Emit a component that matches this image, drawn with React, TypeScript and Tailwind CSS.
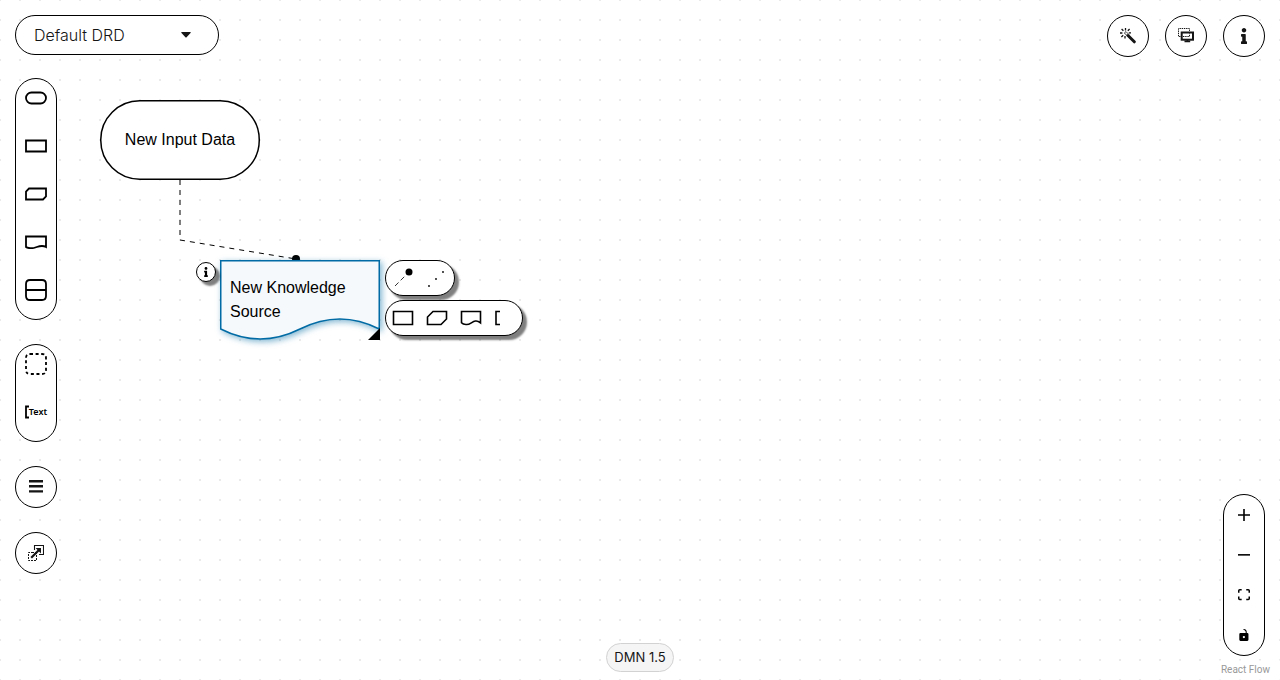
import type { ReactNode } from "react";
import { FaInfo } from "react-icons/fa";

const pill = "flex flex-col items-center rounded-full border border-black bg-white";
const round =
  "flex size-[42px] items-center justify-center rounded-full border border-black bg-white text-[#151515]";
const floating = "border border-black bg-white shadow-[4px_4px_2px_0px_rgba(0,0,0,0.5)]";

function Tool({ label, children }: { label: string; children: ReactNode }) {
  return (
    <button type="button" aria-label={label} className="flex h-12 w-10 items-center justify-center">
      {children}
    </button>
  );
}

function Shape({ d, h = 14, dash }: { d: string; h?: number; dash?: string }) {
  return (
    <svg width="24" height={h} viewBox={`0 0 24 ${h}`} fill="none" stroke="#000" strokeWidth="1.8" strokeDasharray={dash}>
      <path d={d} />
    </svg>
  );
}

function MiniShape({ label, d }: { label: string; d: string }) {
  return (
    <button type="button" aria-label={label} className="flex h-full w-[34px] items-center justify-center">
      <svg width="22" height="16" viewBox="0 0 22 16" fill="none" stroke="#000" strokeWidth="1.6">
        <path d={d} />
      </svg>
    </button>
  );
}

function WandIcon() {
  return (
    <svg width="16" height="16" viewBox="0 0 16 16" fill="none" stroke="#151515">
      <path d="M8 7.5L14.3 13.8" strokeWidth="3" strokeLinecap="round" />
      <path d="M4.4 5L7.4 8M6 3.6L9 6.6" strokeWidth=".8" />
      <path d="M4.3 4.9L6 3.6" strokeWidth=".8" />
      <path d="M5.5 0V2.4M1.6 1L3.4 2.8M0 5H2.4M9.6 1L7.8 2.8M1.4 9L3.2 7.2M5 8V10.4M8.8 4.8H11" strokeWidth="1.3" />
    </svg>
  );
}

function OverlaysIcon() {
  return (
    <svg width="16" height="16" viewBox="0 0 16 16" fill="none" stroke="#151515">
      <path d="M2.5 8.5H.5V.5H11.5V3.5" strokeDasharray="1.4 .8" />
      <rect x="3.7" y="4.5" width="11.3" height="7.2" strokeWidth="2" />
      <path d="M5 8.5H11.5V5.5" strokeDasharray="1.4 .8" />
      <path d="M6.5 13.4H12.2M9.4 12V14" strokeWidth="1.6" />
    </svg>
  );
}

function ExpandIcon() {
  return (
    <svg width="16" height="16" viewBox="0 0 16 16" fill="none" stroke="#151515">
      <path d="M6.5 5V.5H15.5V9.5H11" strokeWidth="1.1" />
      <path d="M5 7.5H.5V15.5H8.5V11" strokeDasharray="2 1" />
      <path d="M5 7.5H8.5V11" strokeDasharray="1 1" />
      <path d="M3.2 12.8L11 5" strokeWidth="2.2" />
      <path d="M7.6 3.1H13V8.5Z" fill="#151515" stroke="none" />
    </svg>
  );
}

function ControlButton({ label, children }: { label: string; children: ReactNode }) {
  return (
    <button type="button" aria-label={label} className="flex size-10 items-center justify-center">
      {children}
    </button>
  );
}

function Diagram() {
  return (
    <main className="absolute inset-0 overflow-hidden font-['Liberation_Sans',Arial,sans-serif] text-base leading-6 text-black">
      <svg className="absolute left-0 top-0" width="400" height="360" viewBox="0 0 400 360" fill="none">
        <path d="M180 180V240L296 259" stroke="#000" strokeDasharray="5 5" />
        <circle cx="296" cy="259" r="4" fill="#000" />
        <rect x="100.75" y="100.75" width="158.5" height="78.5" rx="39" fill="#fff" fillOpacity=".9" stroke="#000" strokeWidth="1.5" />
        <path
          className="drop-shadow-[2px_2px_3px_rgba(0,107,164,0.5)]"
          d="M220.75 260.75H379.25V329Q340 309 300 329T220.75 329Z"
          fill="#f5f9fc"
          stroke="#006ba4"
          strokeWidth="1.5"
        />
        <path d="M380 328V340H368Z" fill="#000" />
      </svg>
      <div className="absolute left-[100px] top-[100px] flex h-20 w-40 items-center justify-center">New Input Data</div>
      <div className="absolute left-[220px] top-[260px] w-40 px-[10px] py-4">New Knowledge Source</div>
      <button
        type="button"
        aria-label="Node information"
        className={`${floating} absolute left-[196px] top-[262px] flex size-5 items-center justify-center rounded-full`}
      >
        <FaInfo size={10} />
      </button>
      <div className="absolute left-[385px] top-[260px] flex flex-col items-start gap-1">
        <div className={`${floating} flex h-9 items-center rounded-full`}>
          <button type="button" aria-label="Authority requirement" className="flex h-full w-[34px] items-center justify-center">
            <svg width="22" height="22" viewBox="0 0 22 22">
              <path d="M3 19L14 8" stroke="#000" strokeWidth=".8" strokeDasharray="5 3" />
              <circle cx="17" cy="5" r="3.5" />
            </svg>
          </button>
          <button type="button" aria-label="Association" className="flex h-full w-[34px] items-center justify-center">
            <svg width="22" height="22" viewBox="0 0 22 22">
              <circle cx="3" cy="19" r=".9" />
              <circle cx="10" cy="12" r=".9" />
              <circle cx="17" cy="5" r=".9" />
            </svg>
          </button>
        </div>
        <div className={`${floating} flex h-9 items-center rounded-full`}>
          <MiniShape label="Decision" d="M1.5 1.5H20.5V14.5H1.5Z" />
          <MiniShape label="Business knowledge model" d="M7 1.5H20.5V9L15 14.5H1.5V7Z" />
          <MiniShape label="Knowledge source" d="M1.5 1.5H20.5V12.8C14 7.5 11 15.5 6 14.5Q3 14.5 1.5 12.8Z" />
          <MiniShape label="Text annotation" d="M6 1.5H2V14.5H6" />
        </div>
      </div>
    </main>
  );
}

export default function App() {
  return (
    <div className="relative flex min-h-screen flex-col overflow-hidden bg-white bg-[conic-gradient(from_270deg_at_2px_2px,#ebebeb_90deg,transparent_0)] bg-[length:20px_20px] bg-[position:-1px_-1px] font-[Inter,sans-serif]">
      <Diagram />
      <div className="pointer-events-none relative grid flex-1 grid-cols-[1fr_auto_1fr] px-[15px] pb-2 pt-[15px] *:pointer-events-auto">
        <aside className="flex w-[204px] flex-col items-start gap-6">
          <div className="relative w-full">
            <select
              aria-label="Diagram"
              className="h-10 w-full appearance-none rounded-full border border-black bg-white pl-[18px] pr-10 text-base font-light text-[#151515]"
            >
              <option>Default DRD</option>
            </select>
            <svg className="pointer-events-none absolute right-7 top-[17px]" width="10" height="6" viewBox="0 0 10 6" fill="#151515">
              <path d="M.8 0H9.2Q10.2.4 9.5 1.1L5.6 5.2Q5 5.8 4.4 5.2L.5 1.1Q-.2.4.8 0Z" />
            </svg>
          </div>

          <nav aria-label="Nodes" className={`${pill} -mt-px`}>
            <div className="-mt-[5px] flex flex-col items-center pb-[5px]">
              <Tool label="Input data"><Shape d="M7.5 1.5H16.5A5.5 5.5 0 0 1 16.5 12.5H7.5A5.5 5.5 0 0 1 7.5 1.5Z" /></Tool>
              <Tool label="Decision"><Shape d="M2 1.5H22V12.5H2Z" /></Tool>
              <Tool label="Business knowledge model"><Shape d="M5 1.5H22V9.5L19 12.5H2V4.5Z" /></Tool>
              <Tool label="Knowledge source"><Shape d="M2 1.5H22V12C16 8.5 12 14 6 13.2Q3 13 2 12Z" /></Tool>
              <Tool label="Decision service">
                <Shape h={24} d="M6 2H18Q22 2 22 6V18Q22 22 18 22H6Q2 22 2 18V6Q2 2 6 2ZM2 12H22" />
              </Tool>
            </div>
          </nav>

          <nav aria-label="Annotations" className={pill}>
            <div className="-mt-[5px] flex flex-col items-center pb-[5px]">
              <Tool label="Group">
                <Shape h={24} dash="3 2.6" d="M6 2H18Q22 2 22 6V18Q22 22 18 22H6Q2 22 2 18V6Q2 2 6 2Z" />
              </Tool>
              <Tool label="Text annotation">
                <span className="flex items-center font-['Noto_Sans',sans-serif] text-[9px] font-semibold leading-3">
                  <svg width="4" height="14" viewBox="0 0 4 14" fill="none" stroke="#000" strokeWidth="1.8">
                    <path d="M4 1.5H1V12.5H4" />
                  </svg>
                  Text
                </span>
              </Tool>
            </div>
          </nav>

          <button type="button" aria-label="DRG nodes" className={round}>
            <svg width="14" height="14" viewBox="0 0 14 14" fill="none" stroke="#151515" strokeWidth="2.4">
              <path d="M0 1.2H14M0 6.3H14M0 11.4H14" />
            </svg>
          </button>
          <button type="button" aria-label="External nodes" className={round}>
            <ExpandIcon />
          </button>
        </aside>

        <footer className="flex flex-col justify-end">
          <span className="rounded-full border border-[#d2d2d2] bg-[#f5f5f5] px-[7px] py-1 text-[13px] leading-[19px] text-[#151515]">DMN 1.5</span>
        </footer>

        <aside className="flex flex-col items-end justify-between">
          <div className="flex gap-4">
            <button type="button" aria-label="Autolayout" className={round}><WandIcon /></button>
            <button type="button" aria-label="Overlays" className={round}><OverlaysIcon /></button>
            <button type="button" aria-label="Properties" className={round}><FaInfo size={16} /></button>
          </div>
          <div className={`${pill} mb-4`}>
            <ControlButton label="Zoom in">
              <svg width="12" height="12" viewBox="0 0 32 32"><path d="M32 18.133H18.133V32h-4.266V18.133H0v-4.266h13.867V0h4.266v13.867H32z" /></svg>
            </ControlButton>
            <ControlButton label="Zoom out">
              <svg width="12" height="2" viewBox="0 0 32 5"><path d="M0 0h32v4.2H0z" /></svg>
            </ControlButton>
            <ControlButton label="Fit view">
              <svg width="12" height="12" viewBox="0 0 32 32" fill="none" stroke="#000" strokeWidth="4">
                <path d="M2 9.8V4.6Q2 2 4.6 2H9.8M22 2H27.4Q30 2 30 4.6V9.8M30 20V25.4Q30 28 27.4 28H22M9.8 28H4.6Q2 28 2 25.4V20" />
              </svg>
            </ControlButton>
            <ControlButton label="Toggle interactivity">
              <svg width="12" height="12" viewBox="0 0 25 32"><path d="M21.333 10.667H19.81V7.619C19.81 3.429 16.38 0 12.19 0c-4.114 1.828-1.37 2.133.305 2.438 1.676.305 4.42 2.59 4.42 5.181v3.048H3.047A3.056 3.056 0 000 13.714v15.238A3.056 3.056 0 003.048 32h18.285a3.056 3.056 0 003.048-3.048V13.714a3.056 3.056 0 00-3.048-3.047zM12.19 24.533a3.056 3.056 0 01-3.047-3.047 3.056 3.056 0 013.047-3.048 3.056 3.056 0 013.048 3.048 3.056 3.056 0 01-3.048 3.047z" /></svg>
            </ControlButton>
          </div>
        </aside>
      </div>
      <a
        href="https://reactflow.dev"
        className="absolute bottom-0 right-0 bg-white/50 px-[10px] py-1 font-[Roboto,sans-serif] text-[10px] leading-3 text-[#999]"
      >
        React Flow
      </a>
    </div>
  );
}
